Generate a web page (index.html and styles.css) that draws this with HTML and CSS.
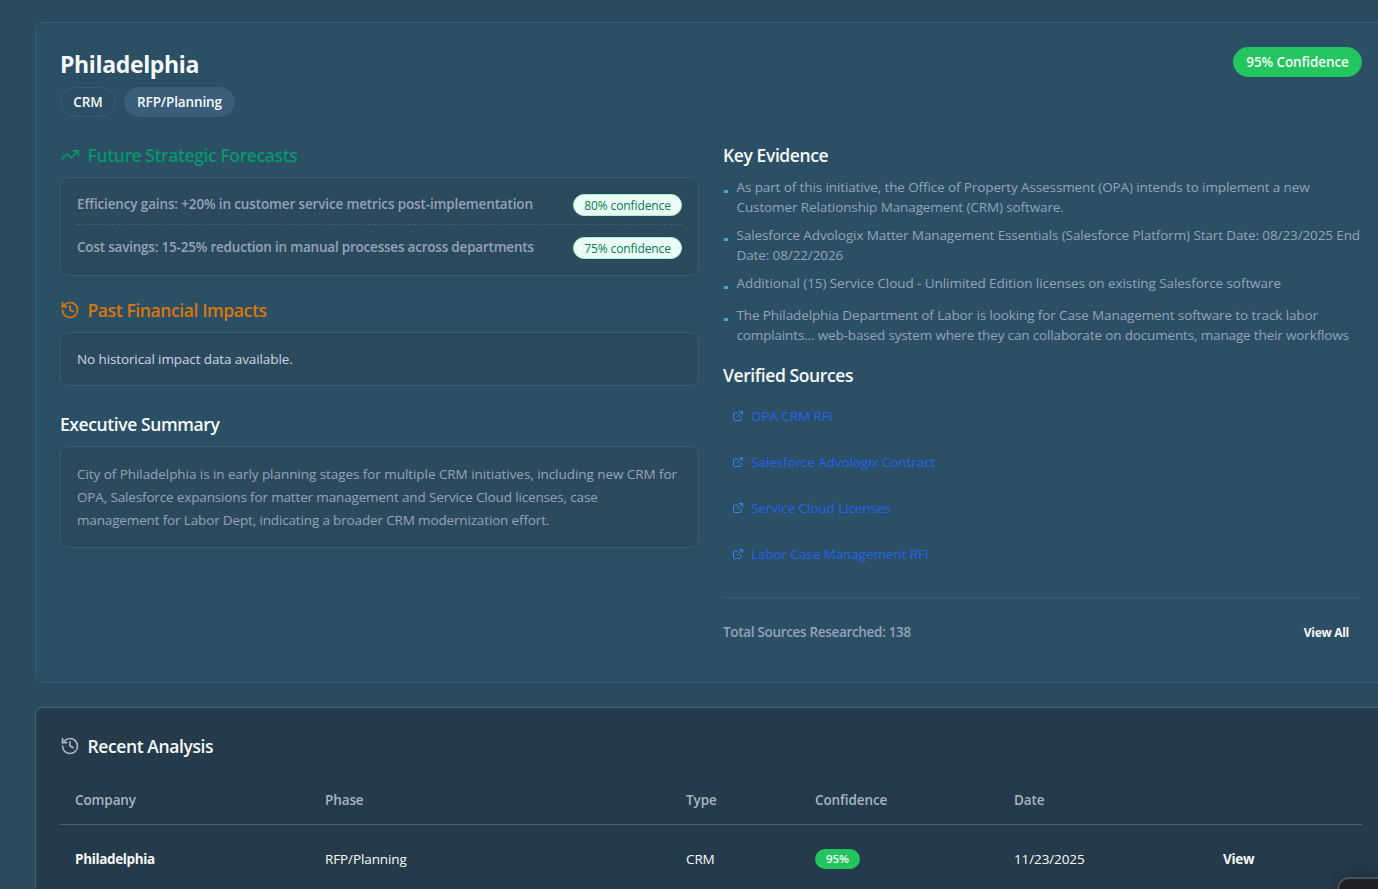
FILE: index.html
```
<!DOCTYPE html>
<html lang="en">
<head>
    <meta charset="UTF-8">
    <title>Initiative Analysis</title>
    <link rel="stylesheet" href="styles.css">
</head>
<body>
    <svg class="sprite" width="0" height="0">
        <symbol id="icon-trend" viewBox="0 0 24 24">
            <path d="M22 7 13.5 15.5 8.5 10.5 2 17"/>
            <path d="M16 7h6v6"/>
        </symbol>
        <symbol id="icon-history" viewBox="0 0 24 24">
            <path d="M3 12a9 9 0 1 0 9-9 9.75 9.75 0 0 0-6.74 2.74L3 8"/>
            <path d="M3 3v5h5"/>
            <path d="M12 7v5l4 2"/>
        </symbol>
        <symbol id="icon-external" viewBox="0 0 24 24">
            <path d="M15 3h6v6"/>
            <path d="M10 14 21 3"/>
            <path d="M18 13v6a2 2 0 0 1-2 2H5a2 2 0 0 1-2-2V8a2 2 0 0 1 2-2h6"/>
        </symbol>
    </svg>

    <main class="page">
        <section class="card">
            <header class="card-header">
                <div>
                    <h1>Philadelphia</h1>
                    <div class="tags">
                        <span class="tag">CRM</span>
                        <span class="tag tag-filled">RFP/Planning</span>
                    </div>
                </div>
                <span class="tag tag-score">95% Confidence</span>
            </header>

            <div class="columns">
                <div class="column">
                    <h2 class="forecast-title"><svg class="icon"><use href="#icon-trend"/></svg><span>Future Strategic Forecasts</span></h2>
                    <div class="box forecasts">
                        <div class="forecast">
                            <span class="forecast-text">Efficiency gains: +20% in customer service metrics post-implementation</span>
                            <span class="pill">80% confidence</span>
                        </div>
                        <div class="forecast">
                            <span class="forecast-text">Cost savings: 15-25% reduction in manual processes across departments</span>
                            <span class="pill">75% confidence</span>
                        </div>
                    </div>

                    <h2 class="impact-title"><svg class="icon"><use href="#icon-history"/></svg><span>Past Financial Impacts</span></h2>
                    <div class="box impact">No historical impact data available.</div>

                    <h2>Executive Summary</h2>
                    <div class="box summary">
                        <span class="summary-first">City of Philadelphia is in early planning stages for multiple CRM initiatives, including new CRM for</span><br>
                        OPA, Salesforce expansions for matter management and Service Cloud licenses, case<br>
                        management for Labor Dept, indicating a broader CRM modernization effort.
                    </div>
                </div>

                <div class="column">
                    <h2>Key Evidence</h2>
                    <ul class="evidence">
                        <li><span>As part of this initiative, the Office of Property Assessment (OPA) intends to implement a new<br>Customer Relationship Management (CRM) software.</span></li>
                        <li><span>Salesforce Advologix Matter Management Essentials (Salesforce Platform) Start Date: 08/23/2025 End<br>Date: 08/22/2026</span></li>
                        <li><span class="evidence-loose">Additional (15) Service Cloud - Unlimited Edition licenses on existing Salesforce software</span></li>
                        <li><span>The Philadelphia Department of Labor is looking for Case Management software to track labor<br><span class="evidence-tight">complaints... web-based system where they can collaborate on documents, manage their workflows</span></span></li>
                    </ul>

                    <h2>Verified Sources</h2>
                    <div class="sources">
                        <a class="source"><svg class="icon-small"><use href="#icon-external"/></svg>OPA CRM RFI</a>
                        <a class="source"><svg class="icon-small"><use href="#icon-external"/></svg>Salesforce Advologix Contract</a>
                        <a class="source"><svg class="icon-small"><use href="#icon-external"/></svg>Service Cloud Licenses</a>
                        <a class="source"><svg class="icon-small"><use href="#icon-external"/></svg>Labor Case Management RFI</a>
                    </div>
                    <div class="total">
                        <span>Total Sources Researched: 138</span>
                        <button class="view-all">View All</button>
                    </div>
                </div>
            </div>
        </section>

        <section class="card card-dark">
            <h2 class="recent-title"><svg class="icon"><use href="#icon-history"/></svg><span>Recent Analysis</span></h2>
            <table>
                <colgroup>
                    <col class="col-company">
                    <col class="col-phase">
                    <col class="col-type">
                    <col class="col-confidence">
                    <col class="col-date">
                    <col>
                </colgroup>
                <thead>
                    <tr>
                        <th>Company</th>
                        <th>Phase</th>
                        <th>Type</th>
                        <th>Confidence</th>
                        <th>Date</th>
                        <th></th>
                    </tr>
                </thead>
                <tbody>
                    <tr>
                        <td class="company">Philadelphia</td>
                        <td>RFP/Planning</td>
                        <td>CRM</td>
                        <td><span class="score">95%</span></td>
                        <td>11/23/2025</td>
                        <td><button class="view">View</button></td>
                    </tr>
                </tbody>
            </table>
        </section>
    </main>

    <div class="widget"></div>
</body>
</html>
```
FILE: styles.css
```
* {
    box-sizing: border-box;
}

body {
    margin: 0;
    background-color: #2c4a5e;
    color: #f8fafc;
    font-family: "Segoe UI", "Open Sans", "Noto Sans", sans-serif;
    font-size: 13.5px;
    line-height: 20px;
    letter-spacing: -0.11px;
    white-space: nowrap;
}

h1, h2, ul {
    margin: 0;
    padding: 0;
}

button {
    background: none;
    border: none;
    padding: 0;
    color: #f8fafc;
    font: inherit;
    font-weight: 700;
    letter-spacing: -0.3px;
    cursor: pointer;
}

.sprite {
    position: absolute;
}

.page {
    height: 889px;
    padding: 22px 0 0 35px;
    overflow: hidden;
}

.card {
    width: 1352px;
    height: 661px;
    padding: 24px;
    border: 1px solid #2b6280;
    border-radius: 8px;
    background-color: #2b4f65;
}

.card-dark {
    height: 182px;
    margin-top: 24px;
    border-color: #3b6075;
    border-bottom: none;
    border-radius: 8px 8px 0 0;
    background-color: #253a4a;
}

.card-header {
    display: flex;
    justify-content: space-between;
    align-items: flex-start;
    margin-bottom: 24px;
}

h1 {
    font-size: 23px;
    font-weight: 700;
    line-height: 34px;
    height: 32px;
    letter-spacing: -0.35px;
}

h2 {
    display: flex;
    align-items: center;
    gap: 7.5px;
    height: 28px;
    margin-bottom: 8px;
    font-size: 17.5px;
    font-weight: 600;
    line-height: 28px;
    letter-spacing: -0.4px;
}

.icon {
    width: 20px;
    height: 20px;
    fill: none;
    stroke: currentColor;
    stroke-width: 2;
    stroke-linecap: round;
    stroke-linejoin: round;
}

.tags {
    display: flex;
    gap: 8px;
    margin-top: 8px;
}

.tag {
    display: flex;
    align-items: center;
    justify-content: center;
    width: 56px;
    height: 30px;
    border: 1px solid #3a5b73;
    border-radius: 15px;
    font-weight: 600;
}

.tag-filled {
    width: 111px;
    background-color: #3a5d7a;
    border-color: #3a5d7a;
}

.tag-score {
    width: 129px;
    background-color: #22c55e;
    border-color: #22c55e;
}

.columns {
    display: grid;
    grid-template-columns: 1fr 1fr;
    gap: 24px;
}

.box {
    padding: 16px;
    border: 1px solid #3a5b70;
    border-radius: 8px;
    background-color: #2c4a5e;
}

.forecast-title {
    color: #059669;
}

.forecasts {
    height: 99px;
    margin-bottom: 20px;
}

.forecast {
    display: flex;
    justify-content: space-between;
    color: #94a3b8;
    font-weight: 600;
    letter-spacing: -0.21px;
}

.forecast:first-child {
    padding-bottom: 8px;
    margin-bottom: 12px;
    border-bottom: 1px dashed #3f6076;
    letter-spacing: -0.14px;
}

.pill {
    display: flex;
    align-items: center;
    justify-content: center;
    width: 109px;
    height: 22px;
    padding-top: 1px;
    border: 1px solid #a7f3d0;
    border-radius: 11px;
    background-color: #ecfdf5;
    color: #047857;
    font-size: 12px;
    font-weight: 500;
    letter-spacing: -0.1px;
}

.impact-title {
    color: #d97706;
}

.impact {
    height: 54px;
    margin-bottom: 24px;
    color: #cbd5e1;
}

.summary {
    height: 102px;
    color: #94a3b8;
    line-height: 23px;
    letter-spacing: -0.15px;
}

.summary-first {
    letter-spacing: -0.06px;
}

.evidence {
    display: flex;
    flex-direction: column;
    gap: 8px;
    margin-bottom: 16px;
    list-style: none;
    color: #94a3b8;
}

.evidence li {
    display: flex;
    gap: 9px;
    min-height: 24px;
}

.evidence li::before {
    content: "";
    width: 4px;
    height: 3px;
    margin: 13px 0 0 0.5px;
    background-color: #38a9e0;
}

.evidence-loose {
    letter-spacing: -0.07px;
}

.evidence-tight {
    letter-spacing: -0.15px;
}

.sources {
    display: flex;
    flex-direction: column;
    gap: 8px;
}

.source {
    display: flex;
    align-items: center;
    gap: 7px;
    height: 38px;
    padding-left: 9px;
    color: #2563eb;
    letter-spacing: -0.08px;
}

.icon-small {
    width: 12px;
    height: 12px;
    fill: none;
    stroke: #3b82f6;
    stroke-width: 2;
    stroke-linecap: round;
    stroke-linejoin: round;
}

.total {
    display: flex;
    align-items: center;
    justify-content: space-between;
    margin-top: 24px;
    padding: 16px 13px 0 0;
    border-top: 1px solid #3a5f75;
    height: 53px;
    color: #94a3b8;
    font-weight: 600;
    letter-spacing: -0.32px;
}

.view-all {
    padding-top: 2px;
    font-size: 12px;
}

.recent-title {
    margin-bottom: 16px;
}

.recent-title .icon {
    color: #a6b4c5;
}

table {
    width: 100%;
    table-layout: fixed;
    border-collapse: collapse;
}

.col-company {
    width: 250px;
}

.col-phase {
    width: 361px;
}

.col-type {
    width: 129px;
}

.col-confidence {
    width: 199px;
}

.col-date {
    width: 209px;
}

th, td {
    padding: 0 15px;
    text-align: left;
}

th {
    height: 48px;
    border-bottom: 1px solid #3b6573;
    color: #a6b4c5;
    font-weight: 600;
}

td {
    height: 70px;
}

.company {
    font-weight: 700;
    letter-spacing: -0.35px;
}

.score {
    display: flex;
    align-items: center;
    justify-content: center;
    width: 45px;
    height: 20px;
    border-radius: 10px;
    background-color: #22c55e;
    font-size: 11.5px;
    font-weight: 600;
}

/* floating widget tucked into the bottom corner */
.widget {
    position: fixed;
    right: 0;
    bottom: 0;
    width: 41px;
    height: 12px;
    border: 2px solid #46525c;
    border-width: 2px 0 0 2px;
    border-radius: 12px 0 0 0;
    background-color: #202024;
    box-shadow: 0 0 16px rgba(0, 0, 0, 0.3);
}
```
